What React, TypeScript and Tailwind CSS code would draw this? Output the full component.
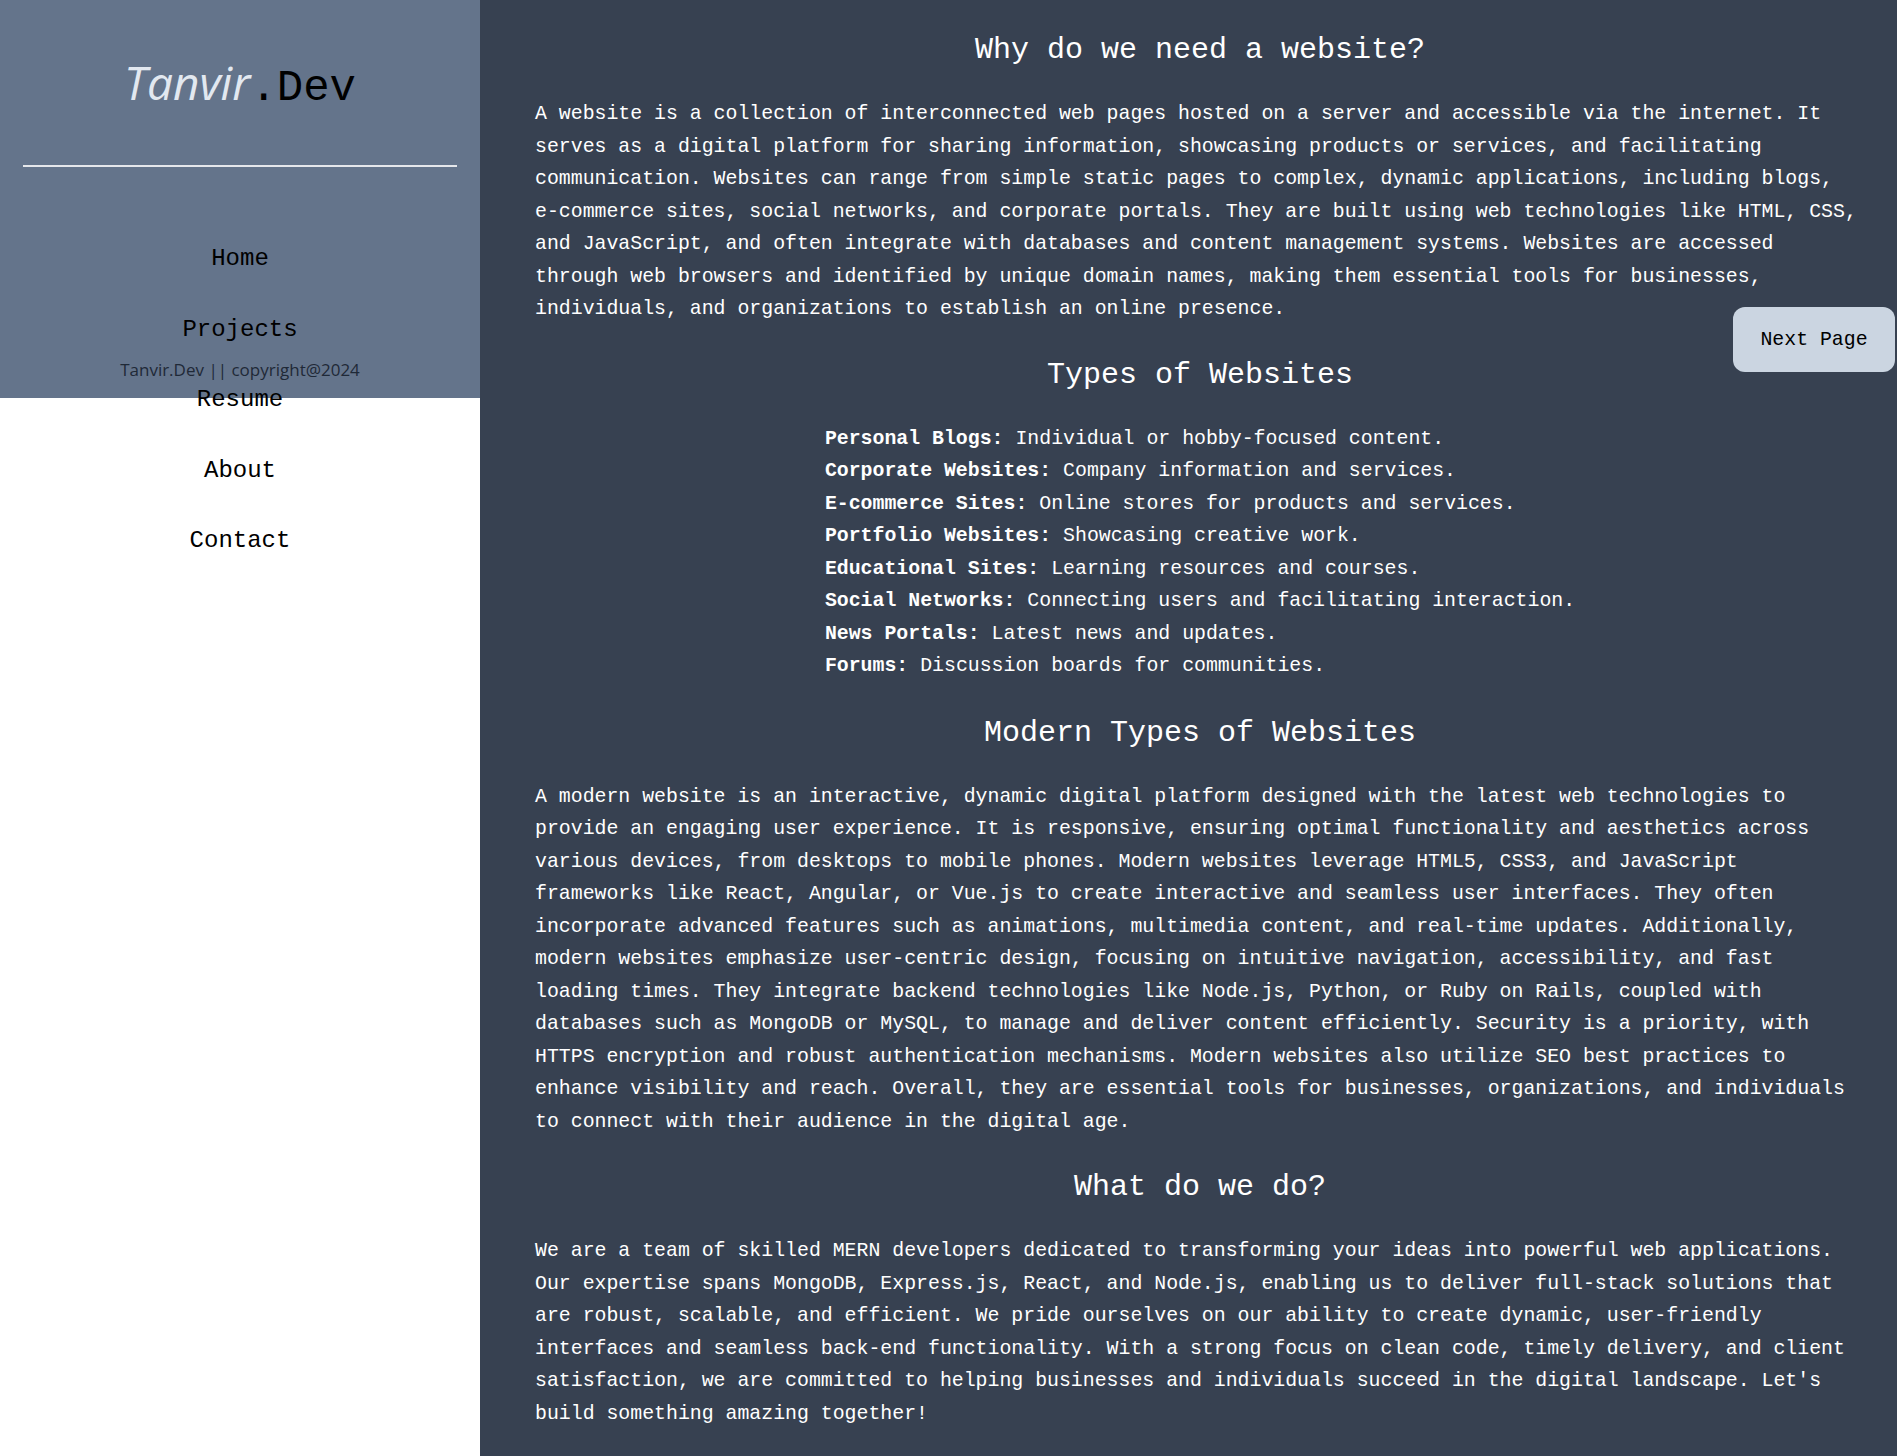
import React from "react";

const mono = "font-['Liberation_Mono','DejaVu_Sans_Mono',monospace]";

const types: [string, string][] = [
  ["Personal Blogs:", "Individual or hobby-focused content."],
  ["Corporate Websites:", "Company information and services."],
  ["E-commerce Sites:", "Online stores for products and services."],
  ["Portfolio Websites:", "Showcasing creative work."],
  ["Educational Sites:", "Learning resources and courses."],
  ["Social Networks:", "Connecting users and facilitating interaction."],
  ["News Portals:", "Latest news and updates."],
  ["Forums:", "Discussion boards for communities."],
];

function Heading({ children }: { children: React.ReactNode }) {
  return (
    <h2 className="mb-[28px] text-center text-[30px] leading-[40px] text-white">
      {children}
    </h2>
  );
}

export default function App() {
  return (
    <div className={`flex min-h-screen w-full ${mono}`}>
      <aside className="w-[480px] shrink-0 bg-white">
        <div className="relative h-[398px] bg-[#64748b]">
          <div className="pt-[52px] text-center leading-[60px]">
            <span className="font-['Open_Sans','Noto_Sans',sans-serif] text-[46px] italic font-normal text-[#e2e8f0]">
              Tanvir
            </span>
            <span className={`${mono} text-[44px] text-black`}>.Dev</span>
          </div>
          <div className="mx-[23px] mt-[39px] h-[2px] bg-[#e5e7eb]" />
          <nav className="mt-[57px]">
            <ul className="text-center text-[24px] text-black">
              {["Home", "Projects", "Resume", "About", "Contact"].map((t) => (
                <li key={t} className="h-[70.5px] leading-[70.5px]">
                  {t}
                </li>
              ))}
            </ul>
          </nav>
          <p className="absolute bottom-[16px] left-0 w-full text-center font-['Open_Sans','Noto_Sans',sans-serif] text-[17px] leading-[24px] text-[#1f2937]">
            Tanvir.Dev || copyright@2024
          </p>
        </div>
      </aside>

      <main className="relative flex-1 bg-[#374151] pb-[28px] pl-[55px] pr-[32px] pt-[30px] text-white">
        <div className="w-[1330px] text-[19.85px] leading-[32.5px]">
          <section>
            <Heading>Why do we need a website?</Heading>
            <p>
              A website is a collection of interconnected web pages hosted on a server and accessible via the internet. It serves as a digital platform for sharing information, showcasing products or services, and facilitating communication. Websites can range from simple static pages to complex, dynamic applications, including blogs, e-commerce sites, social networks, and corporate portals. They are built using web technologies like HTML, CSS, and JavaScript, and often integrate with databases and content management systems. Websites are accessed through web browsers and identified by unique domain names, making them essential tools for businesses, individuals, and organizations to establish an online presence.
            </p>
          </section>

          <section className="mt-[29px]">
            <Heading>Types of Websites</Heading>
            <div className="flex justify-center">
              <ul className="text-left">
                {types.map(([b, t]) => (
                  <li key={b}>
                    <span className="font-bold">{b}</span> {t}
                  </li>
                ))}
              </ul>
            </div>
          </section>

          <section className="mt-[30px]">
            <Heading>Modern Types of Websites</Heading>
            <p>
              A modern website is an interactive, dynamic digital platform designed with the latest web technologies to provide an engaging user experience. It is responsive, ensuring optimal functionality and aesthetics across various devices, from desktops to mobile phones. Modern websites leverage HTML5, CSS3, and JavaScript frameworks like React, Angular, or Vue.js to create interactive and seamless user interfaces. They often incorporate advanced features such as animations, multimedia content, and real-time updates. Additionally, modern websites emphasize user-centric design, focusing on intuitive navigation, accessibility, and fast loading times. They integrate backend technologies like Node.js, Python, or Ruby on Rails, coupled with databases such as MongoDB or MySQL, to manage and deliver content efficiently. Security is a priority, with HTTPS encryption and robust authentication mechanisms. Modern websites also utilize SEO best practices to enhance visibility and reach. Overall, they are essential tools for businesses, organizations, and individuals to connect with their audience in the digital age.
            </p>
          </section>

          <section className="mt-[29px]">
            <Heading>What do we do?</Heading>
            <p>
              We are a team of skilled MERN developers dedicated to transforming your ideas into powerful web applications. Our expertise spans MongoDB, Express.js, React, and Node.js, enabling us to deliver full-stack solutions that are robust, scalable, and efficient. We pride ourselves on our ability to create dynamic, user-friendly interfaces and seamless back-end functionality. With a strong focus on clean code, timely delivery, and client satisfaction, we are committed to helping businesses and individuals succeed in the digital landscape. Let's build something amazing together!
            </p>
          </section>
        </div>

        <button className="absolute right-[2px] top-[307px] flex h-[65px] w-[162px] items-center justify-center rounded-[12px] bg-[#cbd5e1] text-[19.85px] text-black">
          Next Page
        </button>
      </main>
    </div>
  );
}
